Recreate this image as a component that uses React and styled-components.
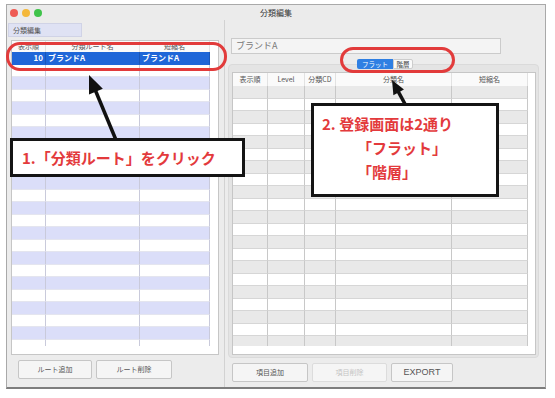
import React from "react";
import styled, { createGlobalStyle } from "styled-components";

const Global = createGlobalStyle`
  html, body { margin: 0; padding: 0; background: #ffffff; }
  body { font-family: "Noto Sans CJK JP", "Noto Sans", sans-serif; }
  * { box-sizing: border-box; }
`;

const Stage = styled.div`
  position: relative;
  width: 555px;
  height: 398px;
  overflow: hidden;
  padding: 4px 0 0 6px;
`;

const Window = styled.div`
  width: 540px;
  height: 385px;
  border: 1px solid #a9a9a9;
  border-bottom: 2px solid #7d7d7d;
  background: #ececec;
  display: flex;
  flex-direction: column;
`;

const TitleBar = styled.div`
  height: 15px;
  display: flex;
  align-items: center;
  padding-left: 3px;
  gap: 4px;
  position: relative;
  background: #ebebeb;
`;

const Light = styled.span`
  width: 8px;
  height: 8px;
  border-radius: 50%;
  background: ${(p) => p.$c};
`;

const Title = styled.div`
  position: absolute;
  left: 0;
  right: 0;
  top: 3px;
  text-align: center;
  font-size: 8px;
  line-height: 10px;
  color: #333;
`;

const Body = styled.div`
  flex: 1;
  display: flex;
  min-height: 0;
`;

const LeftPane = styled.div`
  width: 218px;
  display: flex;
  flex-direction: column;
  border-right: 1px solid #d2d2d2;
`;

const RightPane = styled.div`
  flex: 1;
  display: flex;
  flex-direction: column;
  align-items: flex-start;
`;

const Tab = styled.div`
  margin: 3px 0 0 1px;
  width: 74px;
  height: 14px;
  background: #dfe2f4;
  border: 1px solid #d0d3e6;
  font-size: 7px;
  line-height: 12px;
  color: #555;
  padding-left: 4px;
`;

const Table = styled.div`
  margin: ${(p) => p.$m};
  width: ${(p) => p.$w}px;
  height: ${(p) => p.$h}px;
  border: 1px solid #c6c6c6;
  background: #ffffff;
  display: flex;
  flex-direction: column;
`;

const Grid = styled.div`
  display: grid;
  grid-template-columns: ${(p) => p.$cols};
`;

const HeadCell = styled.div`
  height: ${(p) => p.$h}px;
  font-size: 7px;
  line-height: ${(p) => p.$h}px;
  color: #555;
  text-align: center;
  white-space: nowrap;
  overflow: hidden;
  background: #fafafa;
  border-right: 1px solid #e2e2e2;
`;

const Rows = styled.div`
  flex: 1;
  overflow: hidden;
  min-height: 0;
`;

const Cell = styled.div`
  height: 12.5px;
  background: ${(p) => p.$bg};
  border-right: 1px solid ${(p) => p.$line};
  border-bottom: 1px solid ${(p) => p.$rowline};
  font-size: 8px;
  line-height: 11px;
  color: #fff;
  font-weight: 700;
  padding: 0 2px;
  text-align: ${(p) => p.$align || "left"};
  white-space: nowrap;
  overflow: hidden;
`;

const Gutter = styled.div`
  height: 8px;
  flex: none;
`;

const ButtonRow = styled.div`
  display: flex;
  gap: ${(p) => p.$gap}px;
  margin: 5px 0 0 ${(p) => p.$left}px;
`;

const Button = styled.div`
  width: ${(p) => p.$w}px;
  height: 19px;
  background: #f5f5f5;
  border: 1px solid ${(p) => (p.$disabled ? "#dcdcdc" : "#c6c6c6")};
  border-radius: 2px;
  font-size: ${(p) => (p.$latin ? "9px" : "7px")};
  font-family: ${(p) => (p.$latin ? '"Liberation Sans", sans-serif' : "inherit")};
  line-height: 17px;
  text-align: center;
  color: ${(p) => (p.$disabled ? "#c4c4c4" : "#555")};
`;

const Field = styled.div`
  margin: 18px 0 0 6px;
  width: 270px;
  height: 16px;
  background: #f4f4f4;
  border: 1px solid #cbcbcb;
  font-size: 9px;
  line-height: 14px;
  color: #777;
  padding-left: 4px;
`;

const Segment = styled.div`
  align-self: center;
  margin-top: 5px;
  display: flex;
  position: relative;
  z-index: 1;
  height: 10px;
`;

const SegItem = styled.div`
  width: ${(p) => p.$w}px;
  height: 10px;
  font-size: 6.5px;
  text-align: center;
  color: ${(p) => (p.$on ? "#fff" : "#444")};
  background: ${(p) => (p.$on ? "#2f7fe3" : "#fafafa")};
  border: ${(p) => (p.$on ? "none" : "1px solid #cdcdcd")};
  line-height: ${(p) => (p.$on ? 10 : 8)}px;
  border-radius: ${(p) => (p.$on ? "2px 0 0 2px" : "0 2px 2px 0")};
`;

const GroupBox = styled.div`
  margin: -5px 0 0 3px;
  width: 311px;
  height: 294px;
  background: #e4e4e4;
  border: 1px solid #dadada;
  border-radius: 4px;
  padding: 7px 0 0 3px;
`;

const Overlay = styled.div`
  position: absolute;
  left: ${(p) => p.$x}px;
  top: ${(p) => p.$y}px;
  width: ${(p) => p.$w}px;
  height: ${(p) => p.$h}px;
  pointer-events: none;
`;

const Ring = styled(Overlay)`
  border: 3px solid #e23b3b;
  border-radius: ${(p) => p.$r}px;
`;

const Note = styled(Overlay)`
  background: #fff;
  border: 3px solid #141414;
  color: #e33a3c;
  font-weight: 700;
  font-size: 15px;
  padding: ${(p) => p.$pad};
  line-height: ${(p) => p.$lh}px;
  white-space: nowrap;
`;

const Indent = styled.div`
  padding-left: ${(p) => p.$i}px;
`;

function Arrow({ x1, y1, x2, y2, head = 17, width = 14 }) {
  const dx = x2 - x1;
  const dy = y2 - y1;
  const len = Math.hypot(dx, dy);
  const ux = dx / len;
  const uy = dy / len;
  const bx = x2 - ux * head;
  const by = y2 - uy * head;
  const px = -uy * (width / 2);
  const py = ux * (width / 2);
  return (
    <g>
      <line x1={x1} y1={y1} x2={bx + ux * 2} y2={by + uy * 2} stroke="#111" strokeWidth="3.5" />
      <polygon points={`${x2},${y2} ${bx + px},${by + py} ${bx - px},${by - py}`} fill="#111" />
    </g>
  );
}

const ArrowLayer = styled.svg`
  position: absolute;
  left: 0;
  top: 0;
  pointer-events: none;
`;

const leftCols = [34, 94, 70];
const rightCols = [35, 37, 31, 116, 76];

function LeftTable() {
  const rows = Array.from({ length: 24 });
  const cols = leftCols.map((c) => c + "px").join(" ");
  return (
    <Table $m="3px 0 0 4px" $w={208} $h={315}>
      <Grid $cols={cols}>
        <HeadCell $h={11}>表示順</HeadCell>
        <HeadCell $h={11}>分類ルート名</HeadCell>
        <HeadCell $h={11}>短縮名</HeadCell>
      </Grid>
      <Rows>
        <Grid $cols={cols}>
          {rows.map((_, i) => {
            const sel = i === 0;
            const bg = sel ? "#1f66d8" : i % 2 === 0 ? "#dbdef9" : "#ffffff";
            const line = sel ? "#1a56b8" : "#c9cadb";
            const rl = sel ? "#1f66d8" : "#e4e5ef";
            return (
              <React.Fragment key={i}>
                <Cell $bg={bg} $line={line} $rowline={rl} $align="right">{sel ? "10" : ""}</Cell>
                <Cell $bg={bg} $line={line} $rowline={rl}>{sel ? "ブランドA" : ""}</Cell>
                <Cell $bg={bg} $line={line} $rowline={rl}>{sel ? "ブランドA" : ""}</Cell>
              </React.Fragment>
            );
          })}
        </Grid>
      </Rows>
      <Gutter />
    </Table>
  );
}

function RightTable() {
  const rows = Array.from({ length: 21 });
  const heads = ["表示順", "Level", "分類CD", "分類名", "短縮名"];
  const cols = rightCols.map((c) => c + "px").join(" ");
  return (
    <Table $m="0" $w={304} $h={283}>
      <Grid $cols={cols}>
        {heads.map((h) => (
          <HeadCell key={h} $h={13}>{h}</HeadCell>
        ))}
      </Grid>
      <Rows>
        <Grid $cols={cols}>
          {rows.map((_, i) =>
            rightCols.map((c, j) => (
              <Cell
                key={i + "-" + j}
                $bg={i % 2 === 0 ? "#e9e9e9" : "#ffffff"}
                $line="#c8c8c8"
                $rowline="#d6d6d6"
              />
            ))
          )}
        </Grid>
      </Rows>
      <Gutter />
    </Table>
  );
}

export default function App() {
  return (
    <>
      <Global />
      <Stage>
        <Window>
          <TitleBar>
            <Light $c="#ee5b54" />
            <Light $c="#f4b83a" />
            <Light $c="#3fc34a" />
            <Title>分類編集</Title>
          </TitleBar>
          <Body>
            <LeftPane>
              <Tab>分類編集</Tab>
              <LeftTable />
              <ButtonRow $gap={4} $left={11}>
                <Button $w={74}>ルート追加</Button>
                <Button $w={76}>ルート削除</Button>
              </ButtonRow>
            </LeftPane>
            <RightPane>
              <Field>ブランドA</Field>
              <Segment>
                <SegItem $on $w={36}>フラット</SegItem>
                <SegItem $w={20}>階層</SegItem>
              </Segment>
              <GroupBox>
                <RightTable />
              </GroupBox>
              <ButtonRow $gap={4} $left={7}>
                <Button $w={76}>項目追加</Button>
                <Button $w={75} $disabled>項目削除</Button>
                <Button $w={62} $latin>EXPORT</Button>
              </ButtonRow>
            </RightPane>
          </Body>
        </Window>

        <Ring $x={6} $y={42} $w={221} $h={29} $r={14} />
        <Ring $x={340} $y={47} $w={115} $h={26} $r={13} />

        <ArrowLayer width="555" height="398">
          <Arrow x1={116} y1={140} x2={89} y2={75} head={18} width={15} />
          <Arrow x1={405} y1={104} x2={392} y2={80} head={14} width={12} />
        </ArrowLayer>

        <Note $x={10} $y={138} $w={235} $h={39} $pad="7px 0 0 9px" $lh={20}>
          1.「分類ルート」をクリック
        </Note>
        <Note $x={311} $y={103} $w={188} $h={94} $pad="6px 0 0 8px" $lh={24}>
          <div>2. 登録画面は2通り</div>
          <Indent $i={35}>「フラット」</Indent>
          <Indent $i={35}>「階層」</Indent>
        </Note>
      </Stage>
    </>
  );
}
